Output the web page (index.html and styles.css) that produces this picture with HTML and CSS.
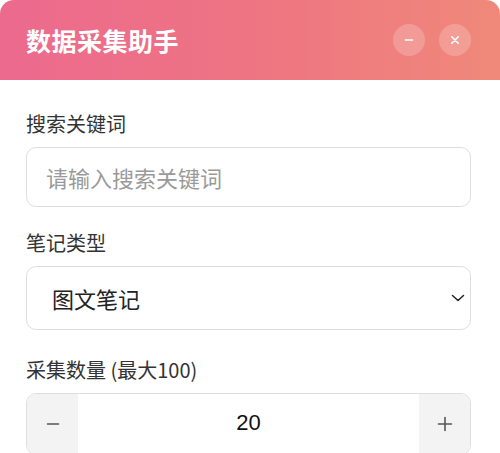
FILE: index.html
```html
<!DOCTYPE html>
<html lang="zh-CN">
<head>
<meta charset="utf-8">
<title>数据采集助手</title>
<link rel="stylesheet" href="styles.css">
</head>
<body>
<div class="app">
  <header class="header">
    <h1 class="title">数据采集助手</h1>
    <div class="actions">
      <button class="win-btn" aria-label="最小化">
        <svg width="12" height="12" viewBox="0 0 12 12"><path d="M2.5 6h7" stroke="#fff" stroke-width="1.6" stroke-linecap="round"/></svg>
      </button>
      <button class="win-btn" aria-label="关闭">
        <svg width="12" height="12" viewBox="0 0 12 12"><path d="M2.8 2.8l6.4 6.4M9.2 2.8l-6.4 6.4" stroke="#fff" stroke-width="1.6" stroke-linecap="round"/></svg>
      </button>
    </div>
  </header>
  <main class="content">
    <div class="field">
      <label class="label">搜索关键词</label>
      <input class="input" type="text" placeholder="请输入搜索关键词">
    </div>
    <div class="field">
      <label class="label">笔记类型</label>
      <div class="select-wrap">
        <select class="select">
          <option>图文笔记</option>
          <option>视频笔记</option>
        </select>
        <svg class="chevron" width="16" height="16" viewBox="0 0 16 16"><path d="M2.5 5.5l5.5 5 5.5-5" fill="none" stroke="#222" stroke-width="1.5" stroke-linecap="round" stroke-linejoin="round"/></svg>
      </div>
    </div>
    <div class="field">
      <label class="label">采集数量 (最大100)</label>
      <div class="stepper">
        <button class="step-btn" aria-label="减少">
          <svg width="14" height="14" viewBox="0 0 14 14"><path d="M1.5 7h11" stroke="#555" stroke-width="1.6" stroke-linecap="round"/></svg>
        </button>
        <input class="step-value" type="text" value="20">
        <button class="step-btn" aria-label="增加">
          <svg width="16" height="16" viewBox="0 0 16 16"><path d="M1.5 8h13M8 1.5v13" stroke="#555" stroke-width="1.6" stroke-linecap="round"/></svg>
        </button>
      </div>
    </div>
  </main>
</div>
</body>
</html>
```

FILE: styles.css
```css
* { box-sizing: border-box; }

html, body {
  margin: 0;
  padding: 0;
  background: #ffffff;
}

body {
  font-family: "Noto Sans CJK SC", "Noto Sans", "Liberation Sans", sans-serif;
  color: #333;
}

.app {
  width: 500px;
  min-height: 453px;
  background: #fff;
  border-radius: 14px 14px 0 0;
  overflow: hidden;
}

.header {
  height: 80px;
  display: flex;
  align-items: center;
  justify-content: space-between;
  padding: 0 29px 0 26px;
  background: linear-gradient(90deg, #ec6a8e 0%, #ee7482 50%, #f0897a 100%);
}

.title {
  margin: 0;
  font-size: 25px;
  font-weight: 700;
  color: #fff;
  letter-spacing: 0.5px;
  line-height: 1;
}

.actions {
  display: flex;
  gap: 14px;
}

.win-btn {
  width: 32px;
  height: 32px;
  border: none;
  padding: 0;
  border-radius: 50%;
  background: rgba(255, 255, 255, 0.2);
  display: flex;
  align-items: center;
  justify-content: center;
}

.content {
  padding: 30px 29px 0 26px;
  display: flex;
  flex-direction: column;
  gap: 22px;
}

.field {
  display: flex;
  flex-direction: column;
}

.label {
  font-size: 20px;
  line-height: 28px;
  color: #333;
  margin-bottom: 9px;
  font-weight: 400;
}

.input {
  height: 60px;
  border: 1.5px solid #dedede;
  border-radius: 10px;
  padding: 0 19px;
  font-family: inherit;
  font-size: 22px;
  color: #333;
  background: #fff;
  outline: none;
}

.input::placeholder {
  color: #9a9a9a;
}

.select-wrap {
  position: relative;
  margin-bottom: 4px;
}

.select {
  width: 100%;
  height: 64px;
  border: 1.5px solid #dedede;
  border-radius: 10px;
  padding: 0 25px;
  font-family: inherit;
  font-size: 22px;
  color: #222;
  background: #fff;
  -webkit-appearance: none;
  appearance: none;
  outline: none;
}

.chevron {
  position: absolute;
  right: 5px;
  top: 24px;
  pointer-events: none;
}

.stepper {
  display: flex;
  height: 62px;
  border: 1.5px solid #dedede;
  border-radius: 10px;
  overflow: hidden;
}

.step-btn {
  width: 51px;
  border: none;
  padding: 0;
  background: #f3f3f3;
  display: flex;
  align-items: center;
  justify-content: center;
}

.step-value {
  flex: 1;
  min-width: 0;
  border: none;
  text-align: center;
  font-family: "Liberation Sans", "Noto Sans", sans-serif;
  font-size: 22px;
  color: #111;
  background: #fff;
  outline: none;
  padding: 0 0 2px;
}
```
